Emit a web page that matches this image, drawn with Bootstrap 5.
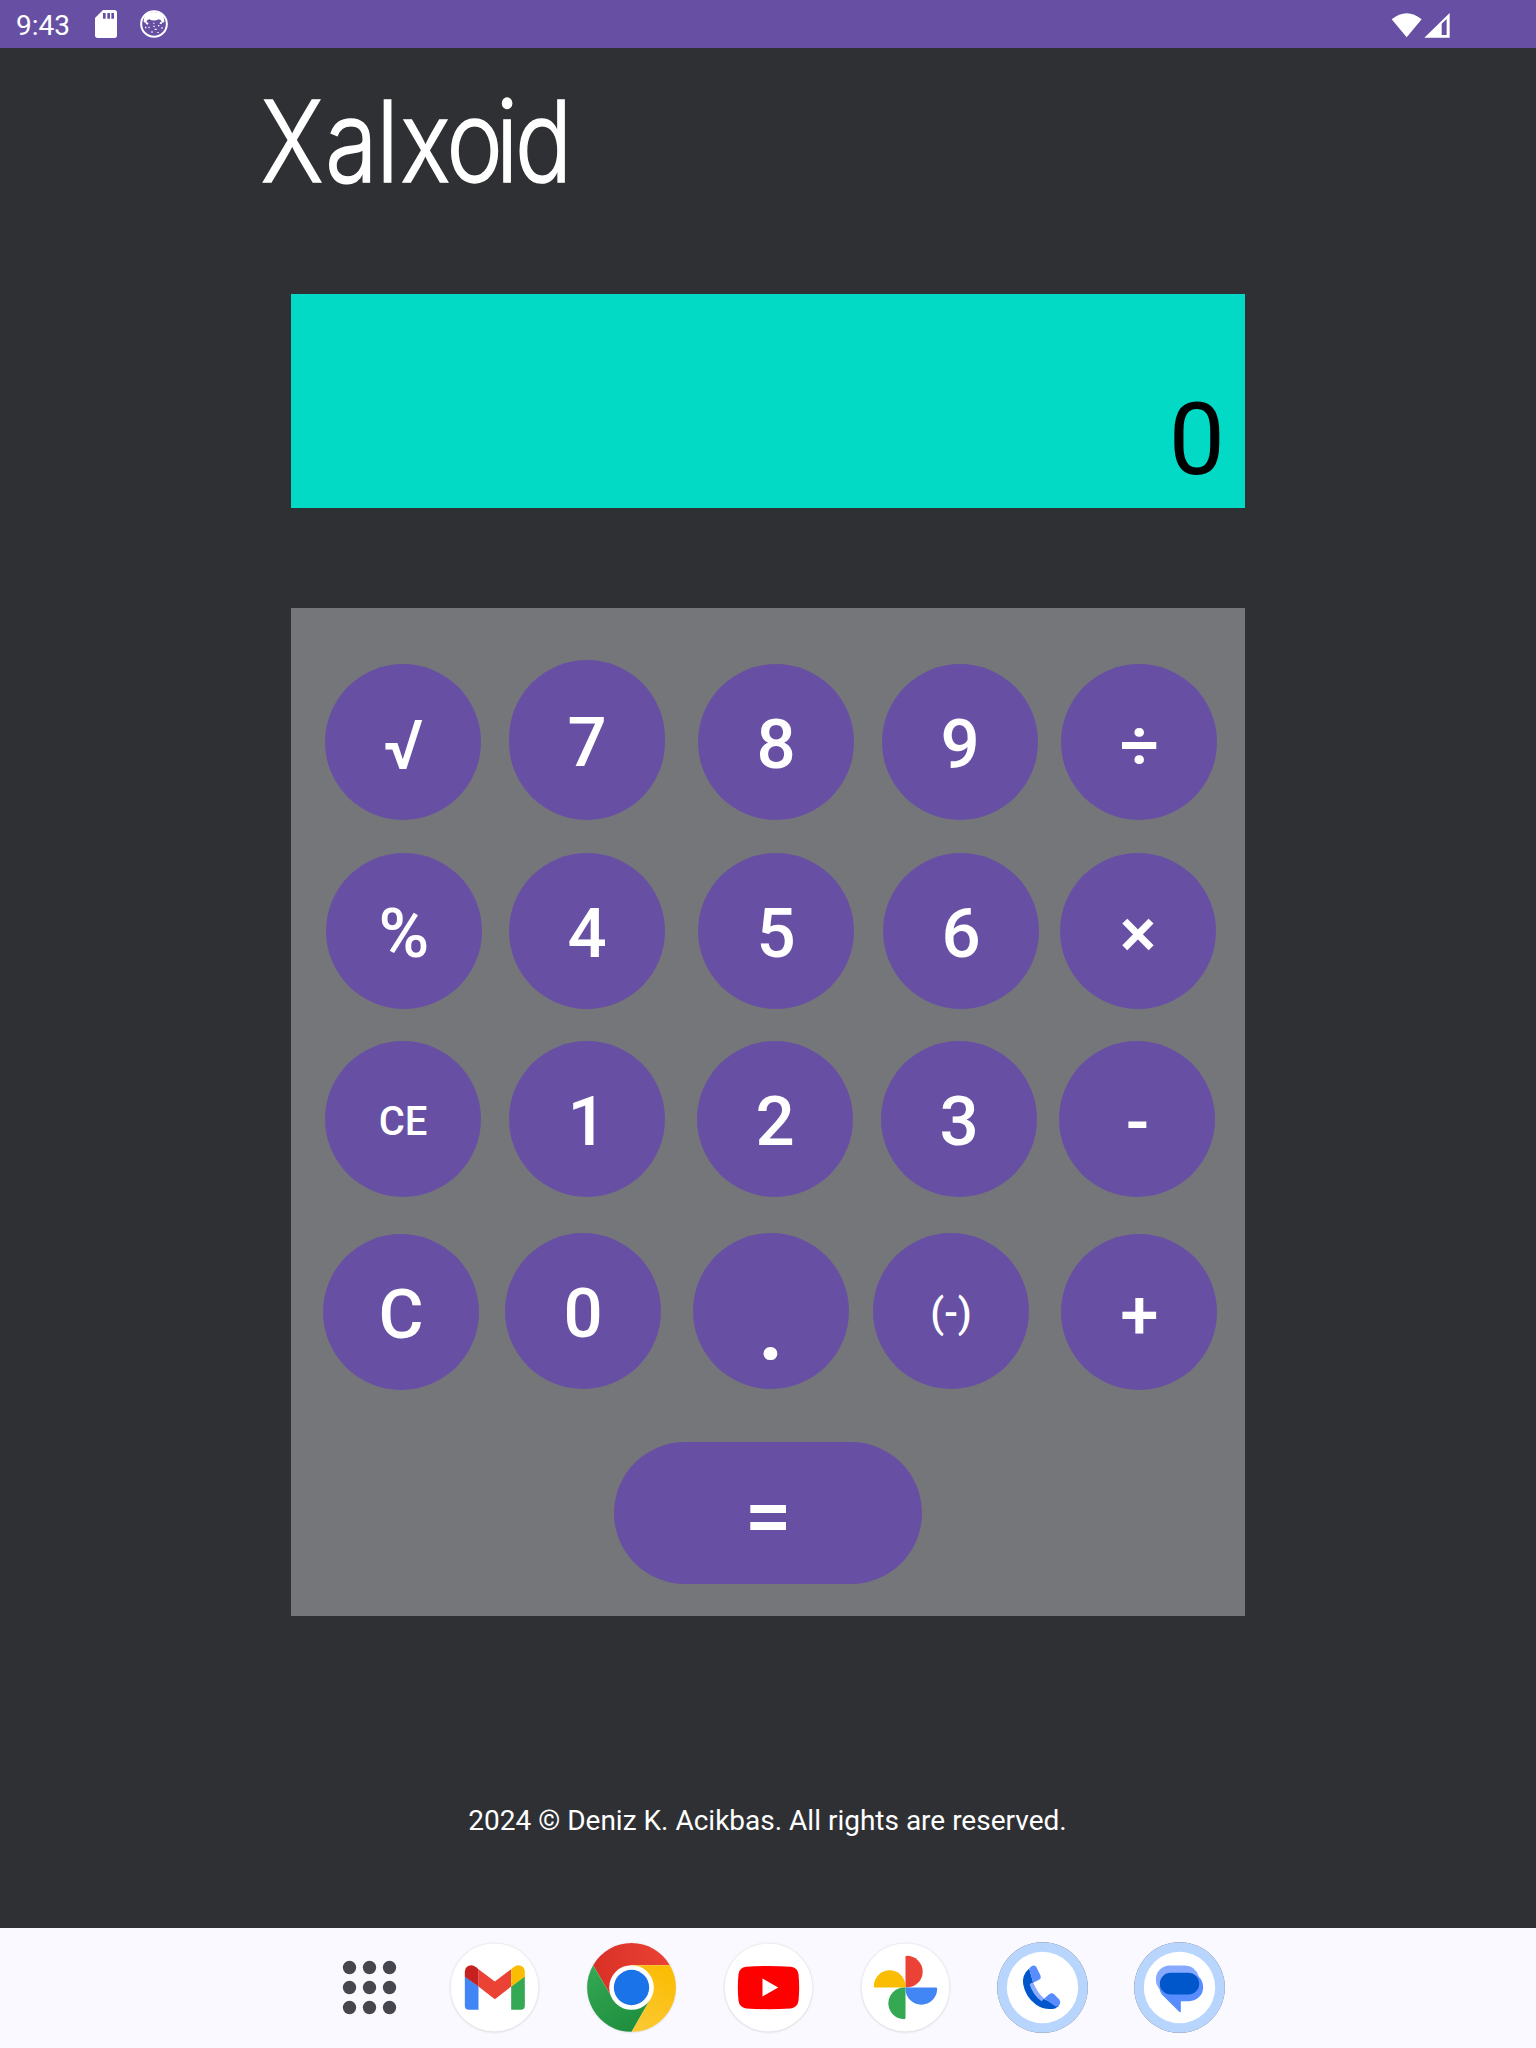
<!DOCTYPE html>
<html lang="en">
<head>
<meta charset="utf-8">
<meta name="viewport" content="width=device-width, initial-scale=1">
<title>Xalxoid</title>
<link href="https://cdn.jsdelivr.net/npm/bootstrap@5.3.0/dist/css/bootstrap.min.css" rel="stylesheet">
<style>
  body { font-family: Roboto, "Liberation Sans", sans-serif; background: #2f3034; height: 2048px; overflow: hidden; }
  svg { display: block; flex: none; overflow: visible; }
  .statusbar { height: 48px; background: #6750a4; padding: 0 86px 0 16px; }
  .clock { font-size: 28px; line-height: 46px; width: 79px; padding-top: 3px; }
  .signals { margin-bottom: 1px; }
  .cat-badge { margin-left: 23px; }
  .brand-title { margin: 20px 0 0 250px; height: 150px; }
  .brand-title text { font-family: Inter, Roboto, sans-serif; font-weight: 300; font-size: 113px; stroke: #fff; stroke-width: 1.6px; }
  .readout { width: 954px; height: 214px; margin-top: 76px; background: #03dac5; padding: 0 20px 10px 0; font-size: 100px; line-height: 117px; color: #000; }
  .keypad { width: 954px; height: 1008px; margin-top: 100px; background: #75767a; padding-top: 52px; }
  .key { width: 156px; height: 156px; flex: none; border: 0; border-radius: 78px; background: #6750a4; color: #fff; font-size: 69px; font-weight: 500; line-height: 80px; padding: 6px 0 0; }
  .key-tall { height: 160px; }
  .key-op { padding-top: 7px; padding-left: 1px; }
  .key-sm { font-size: 40px; line-height: 46px; padding-top: 6px; }
  .key-dot { font-size: 100px; line-height: 117px; padding-top: 26px; }
  .key-wide { width: 308px; height: 142px; border-radius: 71px; font-size: 84px; line-height: 98px; padding-top: 7px; }
  .r1 { height: 160px; }
  .r2 { margin-top: 33px; }
  .r3 { margin-top: 32px; }
  .r4 { margin-top: 36px; height: 157px; }
  .r5 { margin-top: 52px; }
  .r1 > :nth-child(1), .r3 > :nth-child(1) { margin-left: 34px; }
  .r1 > :nth-child(2), .r3 > :nth-child(2) { margin-left: 28px; }
  .r1 > :nth-child(3) { margin-left: 33px; }
  .r1 > :nth-child(4), .r3 > :nth-child(4) { margin-left: 28px; }
  .r1 > :nth-child(5) { margin-left: 23px; }
  .r2 > :nth-child(1) { margin-left: 35px; }
  .r2 > :nth-child(2) { margin-left: 27px; }
  .r2 > :nth-child(3) { margin-left: 33px; }
  .r2 > :nth-child(4) { margin-left: 29px; }
  .r2 > :nth-child(5) { margin-left: 21px; }
  .r3 > :nth-child(3) { margin-left: 32px; }
  .r3 > :nth-child(5) { margin-left: 22px; }
  .r4 > :nth-child(1) { margin-left: 32px; }
  .r4 > :nth-child(2) { margin-left: 26px; }
  .r4 > :nth-child(3) { margin-left: 32px; }
  .r4 > :nth-child(4) { margin-left: 24px; }
  .r4 > :nth-child(5) { margin-left: 32px; }
  .copyright { font-size: 28px; line-height: 34px; padding-right: 1px; margin-top: 188px; }
  .dock { height: 120px; background: #faf9ff; padding: 0 0 1px 319px; gap: 36px; }
  .dock svg:first-child { margin-right: -12px; }
  .disc { filter: drop-shadow(0 1px 3px rgba(0,0,0,.2)); }
  .disc-ring { filter: drop-shadow(0 0 2px rgba(60,50,40,.85)); }
</style>
</head>
<body class="d-flex flex-column text-white">

<header class="statusbar d-flex align-items-center flex-shrink-0">
  <span class="clock">9:43</span>
  <svg width="22" height="28" viewBox="0 0 66 84"><path fill="#fff" fill-rule="evenodd" d="M24 0H58Q66 0 66 8V76Q66 84 58 84H8Q0 84 0 76V24ZM24 9V26H32V9ZM37 9V26H45V9ZM49 9V26H57V9Z"/></svg>
  <svg class="cat-badge" width="28" height="28" viewBox="-42 -42 84 84"><circle r="38.500" fill="none" stroke="#fff" stroke-width="6"/><path fill="#fff" d="M-24-30Q0-42 24-30L30-18 31-6 24-3 20-12 14-14Q0-7-14-14L-20-12-24-3-31-6-30-18ZM-23-6l7 3-3 5-6-2ZM18-6l7 2-3 5-5-2ZM-2-4h3v4h-3ZM-17 8h4v4h-4ZM-2 5h4v4h-4ZM2 14h6v4h-6ZM12 3h4v4h-4ZM22 10h4v4h-4ZM-8 22h4v4h-4ZM10 24h4v3h-4ZM-27 8h4v5h-4Z"/></svg>
  <svg class="signals ms-auto" width="59" height="28" viewBox="0 0 177 84"><path fill="#fff" d="M2 28Q47-8 92 28L47 82Z"/><path fill="#fff" fill-rule="evenodd" d="M100 83L176 9V83ZM152 41V75H167V27Z"/></svg>
</header>

<h1 class="brand-title mb-0 flex-shrink-0">
  <svg width="400" height="150" viewBox="0 0 400 150"><text fill="#fff" y="114.500" transform="scale(.84 1)" x="12.700 89.500 150.500 179 234 293 315.500">Xalxoid</text></svg>
</h1>

<main class="d-flex flex-column align-items-center flex-grow-1">
  <div class="readout d-flex justify-content-end align-items-end">0</div>

  <section class="keypad d-flex flex-column">
    <div class="r1 d-flex align-items-end">
      <button class="key key-op">√</button><button class="key key-tall">7</button><button class="key">8</button><button class="key">9</button><button class="key key-op">÷</button>
    </div>
    <div class="r2 d-flex">
      <button class="key">%</button><button class="key">4</button><button class="key">5</button><button class="key">6</button><button class="key">×</button>
    </div>
    <div class="r3 d-flex">
      <button class="key key-sm">CE</button><button class="key">1</button><button class="key">2</button><button class="key">3</button><button class="key key-op">-</button>
    </div>
    <div class="r4 d-flex">
      <button class="key align-self-end">C</button><button class="key">0</button><button class="key key-dot">.</button><button class="key key-sm">(-)</button><button class="key key-op align-self-end">+</button>
    </div>
    <div class="r5 d-flex justify-content-center">
      <button class="key key-wide">=</button>
    </div>
  </section>

  <p class="copyright mb-0">2024 © Deniz K. Acikbas. All rights are reserved.</p>
</main>

<footer class="dock d-flex align-items-center flex-shrink-0">
  <svg width="101" height="101" viewBox="-151.5 -151.5 303 303" fill="#46464f"><circle cx="-60" cy="-60" r="20"/><circle cy="-60" r="20"/><circle cx="60" cy="-60" r="20"/><circle cx="-60" r="20"/><circle r="20"/><circle cx="60" r="20"/><circle cx="-60" cy="60" r="20"/><circle cy="60" r="20"/><circle cx="60" cy="60" r="20"/></svg>

  <svg width="101" height="101" viewBox="-151.5 -151.5 303 303"><circle class="disc" r="132" fill="#fff"/>
    <path fill="#4285f4" d="M-89-34L-48-3V67H-77Q-89 67-89 55Z"/><path fill="#34a853" d="M91-34L50-3V67H79Q91 67 91 55Z"/><path fill="#ea4335" d="M-48-55L1-18 50-55V-3L1 35-48-3Z"/><path fill="#c5221f" d="M-89-32V-47Q-88-67-69-67-63-67-55-61L-48-55V-3Z"/><path fill="#fbbc04" d="M91-32V-47Q90-67 71-67 65-67 57-61L50-55V-3Z"/></svg>

  <svg width="101" height="101" viewBox="-151.5 -151.5 303 303">
    <defs><linearGradient id="cr"><stop stop-color="#d93025"/><stop offset="1" stop-color="#ea4335"/></linearGradient><linearGradient id="cg" x1=".7" y1="1" x2=".1" y2="0"><stop stop-color="#1e8e3e"/><stop offset="1" stop-color="#34a853"/></linearGradient><linearGradient id="cy" x1=".2" y1="1" x2=".6" y2="0"><stop stop-color="#fcc934"/><stop offset="1" stop-color="#fbbc04"/></linearGradient></defs>
    <circle class="disc" r="132" fill="#fff"/>
    <path fill="url(#cr)" d="M-115-67A133 133 0 0 1 115-67H0L-57 33Z"/><path fill="url(#cy)" d="M115-67A133 133 0 0 1 0 133L57 33 0-67Z"/><path fill="url(#cg)" d="M0 133A133 133 0 0 1-115-67L-57 33 57 33Z"/><circle r="67" fill="#fff"/><circle r="53" fill="#1a73e8"/></svg>

  <svg width="101" height="101" viewBox="-151.5 -151.5 303 303"><circle class="disc" r="132" fill="#fff"/><path fill="red" d="M-67-62Q0-67 67-62 87-60 90-40 94 0 90 40 87 60 67 63 0 67-67 63-87 60-90 40-94 0-90-40-87-60-67-62Z"/><path fill="#fff" d="M-18-27L29 0-18 27Z"/></svg>

  <svg width="101" height="101" viewBox="-151.5 -151.5 303 303"><circle class="disc" r="132" fill="#fff"/>
    <defs><path id="petal" d="M4-95A47.500 47.500 0 0 1 4 0H0V-91Q0-95 4-95Z"/></defs>
    <use href="#petal" fill="#ea4335"/><use href="#petal" fill="#fbbc04" transform="rotate(-90)"/><use href="#petal" fill="#34a853" transform="rotate(180)"/><use href="#petal" fill="#4285f4" transform="rotate(90)"/></svg>

  <svg width="101" height="101" viewBox="-151.5 -151.5 303 303"><circle class="disc-ring" r="136" fill="#b8d5fe"/><circle r="107" fill="#fff"/>
    <path fill="#0057cc" d="M-40-57Q-62-38-58-10-51 28-20 51 5 69 38 63L50 55 3 34-3 40Q-27 20-38-10L-28-15Z"/><path fill="#8aabff" d="M-38-10L-28-15Q-15 17 5 33L-3 41Q-30 21-38-10Z"/><path fill="#598cff" d="M-40-57L-33-64Q-25-69-19-62L-6-36Q-3-28-9-24L-28-14ZM5 33L20 20Q28 14 35 20L51 37Q56 46 50 53 44 59 38 56Z"/></svg>

  <svg width="101" height="101" viewBox="-151.5 -151.5 303 303"><circle class="disc-ring" r="136" fill="#b8d5fe"/><circle r="107" fill="#fff"/>
    <path fill="#87a9ff" d="M-29-66H16Q47-66 58-33L-30 21-54 11Q-71-5-71-24A42 42 0 0 1-29-66Z"/><path fill="#598cff" d="M-26-43H30L57-33Q71-20 71-1A42 42 0 0 1 29 41H4V72Q3 76-1 73L-53 21Q-62 8-59-5Z"/><rect x="-59" y="-44" width="118" height="65" rx="32.500" fill="#0057cc"/></svg>
</footer>

<script src="https://cdn.jsdelivr.net/npm/bootstrap@5.3.0/dist/js/bootstrap.bundle.min.js"></script>
</body>
</html>
